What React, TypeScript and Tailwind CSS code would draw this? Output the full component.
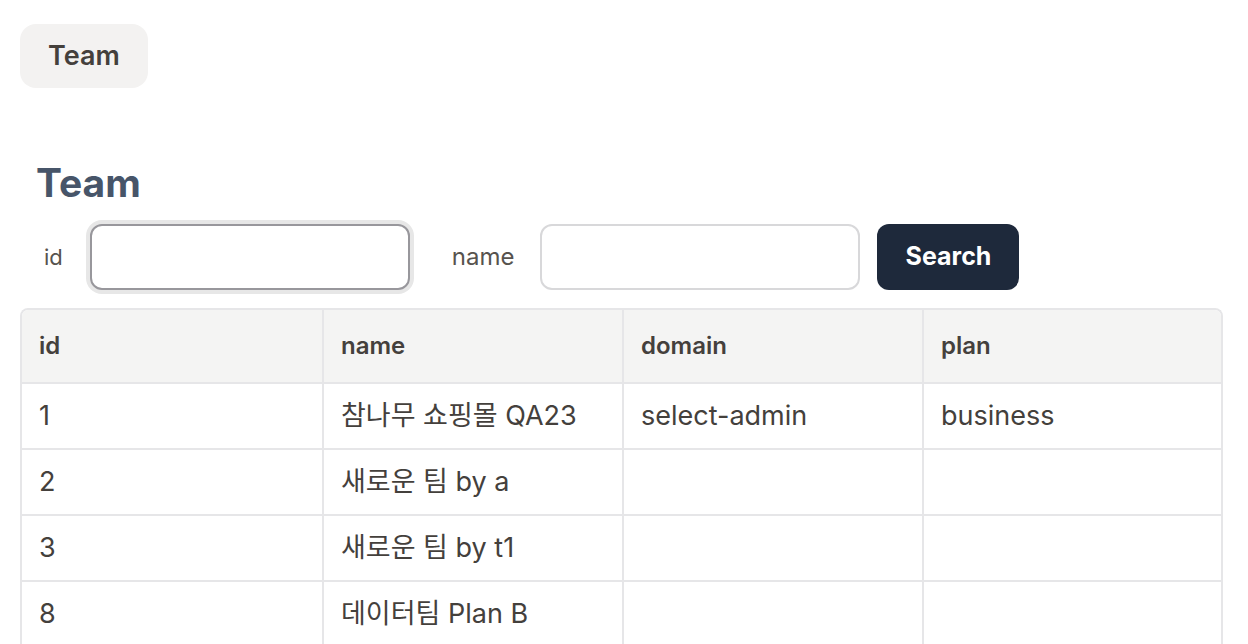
import { useState } from 'react'

const ROWS = [
  { id: 1, name: '참나무 쇼핑몰 QA23', domain: 'select-admin', plan: 'business' },
  { id: 2, name: '새로운 팀 by a', domain: '', plan: '' },
  { id: 3, name: '새로운 팀 by t1', domain: '', plan: '' },
  { id: 8, name: '데이터팀 Plan B', domain: '', plan: '' },
]

const FONT = "font-['Inter','Noto_Sans_CJK_KR',sans-serif]"

export default function App() {
  const [id, setId] = useState('')
  const [name, setName] = useState('')

  return (
    <div className={`${FONT} min-h-screen bg-white text-[#44403c]`}>
      <div className="px-5 pt-6">
        {/* Breadcrumb pill */}
        <div className="inline-flex h-16 w-32 items-center justify-center rounded-2xl bg-[#f3f2f1] text-[27px] font-semibold">
          Team
        </div>

        <h1 className="mt-[75px] pl-[16px] text-[39px] leading-none font-bold text-[#475569]">Team</h1>

        {/* Search form */}
        <div className="mt-[22px] flex items-center">
          <label className="ml-6 text-[22px] text-[#57534e]">id</label>
          <input
            autoFocus
            value={id}
            onChange={(e) => setId(e.target.value)}
            className="ml-[27px] h-[66px] w-[320px] rounded-xl border-2 border-[#98979c] bg-white px-3 text-[24px] outline-none ring-4 ring-[#e7e7e7]"
          />
          <label className="ml-[42px] text-[24px] text-[#57534e]">name</label>
          <input
            value={name}
            onChange={(e) => setName(e.target.value)}
            className="ml-[26px] h-[66px] w-[320px] rounded-xl border-2 border-[#d8d8da] bg-white px-3 text-[24px] outline-none"
          />
          <button className="ml-[17px] h-[66px] w-[142px] rounded-xl bg-[#1e293b] text-[25px] font-bold text-white">
            Search
          </button>
        </div>

        {/* Results table */}
        <div className="mt-[18px] w-[1203px] overflow-hidden rounded-t-lg border-2 border-b-0 border-[#e6e6e8]">
          <table className="w-full table-fixed border-collapse">
            <colgroup>
              <col className="w-[301px]" />
              <col className="w-[300px]" />
              <col className="w-[300px]" />
              <col />
            </colgroup>
            <thead>
              <tr className="h-[73px] bg-[#f4f4f3]">
                {['id', 'name', 'domain', 'plan'].map((h, i) => (
                  <th
                    key={h}
                    className={`px-[17px] text-left text-[24px] font-semibold ${i > 0 ? 'border-l-2 border-[#e6e6e8]' : ''}`}
                  >
                    {h}
                  </th>
                ))}
              </tr>
            </thead>
            <tbody>
              {ROWS.map((r) => (
                <tr key={r.id} className="h-[66px] border-t-2 border-[#e6e6e8] text-[27px]">
                  <td className="px-[17px]">{r.id}</td>
                  <td className="border-l-2 border-[#e6e6e8] px-[17px]">{r.name}</td>
                  <td className="border-l-2 border-[#e6e6e8] px-[17px]">{r.domain}</td>
                  <td className="border-l-2 border-[#e6e6e8] px-[17px]">{r.plan}</td>
                </tr>
              ))}
            </tbody>
          </table>
        </div>
      </div>
    </div>
  )
}
